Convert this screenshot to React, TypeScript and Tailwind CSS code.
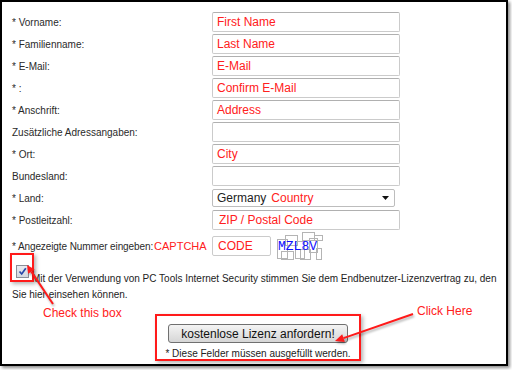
import React from 'react';

const rows: { label: string; value: string }[] = [
  { label: '* Vorname:', value: 'First Name' },
  { label: '* Familienname:', value: 'Last Name' },
  { label: '* E-Mail:', value: 'E-Mail' },
  { label: '* :', value: 'Confirm E-Mail' },
  { label: '* Anschrift:', value: 'Address' },
  { label: 'Zusätzliche Adressangaben:', value: '' },
  { label: '* Ort:', value: 'City' },
  { label: 'Bundesland:', value: '' },
];

function Field({ value, className = '' }: { value: string; className?: string }) {
  return (
    <div
      className={`w-[188px] h-[20px] border border-[#cbcbcb] border-t-[#b0b0b0] rounded-[2px] px-[4px] flex items-center text-[12px] text-[#ff2020] ${className}`}
    >
      {value}
    </div>
  );
}

function Captcha() {
  return (
    <div className="relative w-[54px] h-[28px] ml-[5px]">
      <svg className="absolute inset-0" width="54" height="28" viewBox="0 0 54 28">
        <g fill="none" stroke="#b4b4b4" strokeWidth="1">
          <rect x="1.5" y="7.5" width="10" height="19" />
          <rect x="9.5" y="3.5" width="12" height="10" />
          <rect x="19.5" y="9.5" width="9" height="17" />
          <rect x="26.5" y="0.5" width="12" height="8" />
          <rect x="33.5" y="6.5" width="8" height="14" />
          <rect x="38.5" y="3.5" width="8" height="5" />
          <rect x="5.5" y="19.5" width="12" height="8" />
          <rect x="24.5" y="17.5" width="10" height="10" />
          <rect x="40.5" y="16.5" width="5" height="11" />
        </g>
      </svg>
      <span className="absolute left-[2px] top-[8px] font-['Liberation_Mono',monospace] text-[13px] leading-[14px] text-[#1010ff]">
        MZL8V
      </span>
    </div>
  );
}

export default function App() {
  return (
    <div className="w-[512px] h-[370px] bg-white font-['Liberation_Sans',Arial,sans-serif]">
      <div className="relative w-[508px] h-[366px] border-2 border-black shadow-[2px_2px_3px_rgba(0,0,0,0.45)] pt-[10px] pl-[10px]">
        <div className="grid grid-cols-[200px_auto] gap-y-[2px]">
          {rows.map((r) => (
            <React.Fragment key={r.label}>
              <div className="h-[20px] flex items-center text-[10px] text-[#2a2a2a]">{r.label}</div>
              <Field value={r.value} />
            </React.Fragment>
          ))}

          <div className="h-[20px] flex items-center text-[10px] text-[#2a2a2a]">* Land:</div>
          <div className="h-[20px] flex items-center">
            <div className="w-[183px] h-[18px] border border-[#bdbdbd] rounded-[2px] pl-[4px] pr-[5px] flex items-center text-[12px]">
              <span className="text-[#222]">Germany</span>
              <span className="ml-[5px] text-[#ff2020]">Country</span>
              <svg className="ml-auto" width="7" height="4" viewBox="0 0 7 4">
                <polygon points="0,0 7,0 3.5,4" fill="#111" />
              </svg>
            </div>
          </div>

          <div className="h-[20px] flex items-center text-[10px] text-[#2a2a2a]">* Postleitzahl:</div>
          <Field value="ZIP / Postal Code" className="pl-[6px]" />

          <div className="h-[28px] flex items-center whitespace-nowrap text-[10px] text-[#2a2a2a]">
            <span className="tracking-[-0.1px]">* Angezeigte Nummer eingeben:</span>
            <span className="ml-[1px] text-[11px] text-[#ff2020]">CAPTCHA</span>
          </div>
          <div className="h-[28px] flex items-center">
            <div className="w-[59px] h-[20px] border border-[#cbcbcb] rounded-[2px] pl-[5px] flex items-center text-[12px] text-[#ff2020]">
              CODE
            </div>
            <Captcha />
          </div>
        </div>

        <p className="mt-[5px] text-[10px] leading-[16px] text-[#222]">
          <span className="inline-block w-[13px] h-[13px] ml-[4px] mr-[3px] mb-[4px] border border-[#8a8f99] bg-gradient-to-b from-[#e8ebf0] to-[#d4d8e0] align-baseline">
            <svg width="11" height="11" viewBox="0 0 11 11">
              <path d="M2.5 5.5 L4.7 8 L8.8 2.2" fill="none" stroke="#2848a8" strokeWidth="1.7" />
            </svg>
          </span>
          Mit der Verwendung von PC Tools Internet Security stimmen Sie dem Endbenutzer-Lizenzvertrag zu, den
          <br />
          Sie hier einsehen können.
        </p>

        <div className="mt-[11px] ml-[143px] w-[206px] h-[47px] border-2 border-[#ff1a1a] shadow-[2px_2px_4px_rgba(0,0,0,0.3)] flex flex-col items-center pt-[8px]">
          <button className="w-[180px] h-[19px] border border-[#707070] rounded-[3px] bg-gradient-to-b from-[#f4f4f4] to-[#d6d6d6] text-[12px] text-[#111] flex items-center justify-center">
            kostenlose Lizenz anfordern!
          </button>
          <div className="mt-[3px] text-[10px] text-[#222]">* Diese Felder müssen ausgefüllt werden.</div>
        </div>

        {/* annotations */}
        <div className="absolute left-[8px] top-[251px] w-[24px] h-[29px] border-2 border-[#ff1a1a] shadow-[2px_2px_4px_rgba(0,0,0,0.3)]" />
        <div className="absolute left-[41px] top-[304px] text-[12px] leading-[14px] text-[#ff2020]">Check this box</div>
        <div className="absolute left-[415px] top-[302px] text-[12px] leading-[14px] text-[#ff2020]">Click Here</div>
        <svg
          className="absolute -left-[2px] -top-[2px] pointer-events-none drop-shadow-[1px_2px_1px_rgba(0,0,0,0.3)]"
          width="512"
          height="370"
          viewBox="0 0 512 370"
        >
          <line x1="53" y1="304" x2="31.4" y2="271.6" stroke="#ff1a1a" strokeWidth="2" />
          <polygon points="27,265 34.7,269.4 28.1,273.8" fill="#ff1a1a" />
          <line x1="413" y1="314" x2="343.5" y2="338.1" stroke="#ff1a1a" strokeWidth="2" />
          <polygon points="335,341 342.2,334.3 344.8,341.9" fill="#ff1a1a" />
        </svg>
      </div>
    </div>
  );
}
